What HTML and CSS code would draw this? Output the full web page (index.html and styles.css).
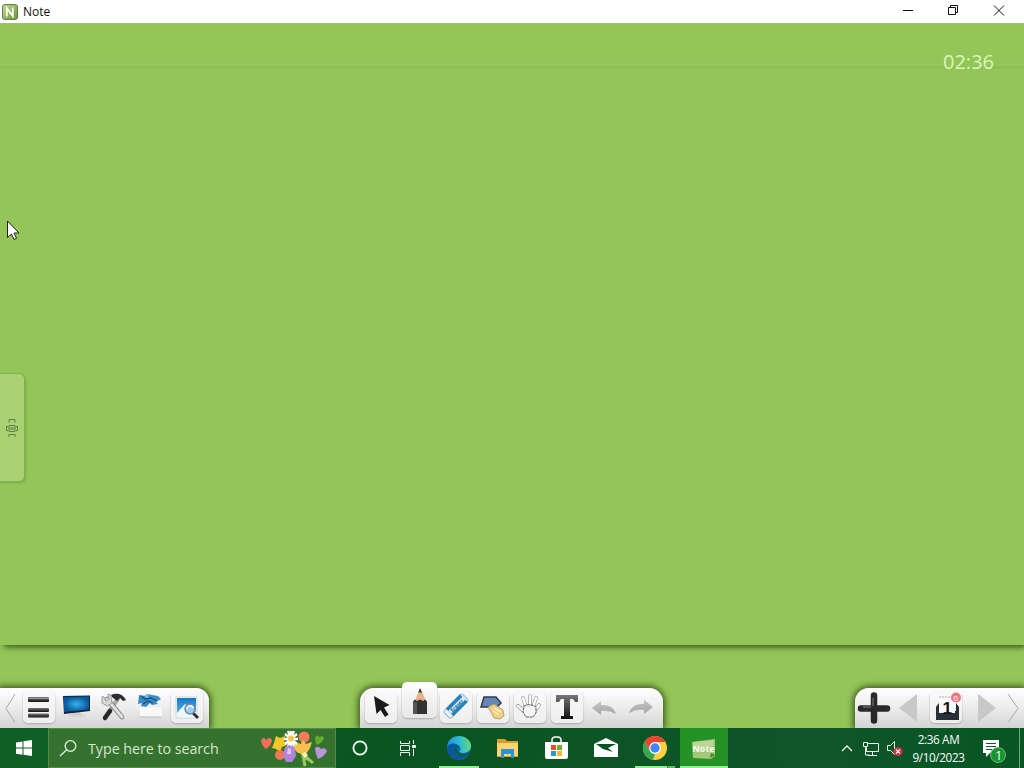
FILE: index.html
```html
<!DOCTYPE html>
<html lang="en">
<head>
<meta charset="utf-8">
<title>Note</title>
<link rel="stylesheet" href="styles.css">
</head>
<body>
<svg class="defs" width="0" height="0">
  <defs>
    <linearGradient id="dark" x2="0" y2="1"><stop offset="0" stop-color="#777"/><stop offset=".5" stop-color="#444"/><stop offset="1" stop-color="#111"/></linearGradient>
    <linearGradient id="grey" x2="0" y2="1"><stop offset="0" stop-color="#c6c6c6"/><stop offset="1" stop-color="#a5a5a5"/></linearGradient>
    <radialGradient id="screen"><stop offset="0" stop-color="#35b4ed"/><stop offset="1" stop-color="#08569c"/></radialGradient>
    <linearGradient id="photo" x2="0" y2="1"><stop offset="0" stop-color="#1478c8"/><stop offset="1" stop-color="#75bdea"/></linearGradient>
    <linearGradient id="edge" x1="0" y1=".4" x2="1" y2=".3"><stop offset="0" stop-color="#1a91dc"/><stop offset=".5" stop-color="#2dbbd1"/><stop offset="1" stop-color="#65d978"/></linearGradient>
    <linearGradient id="leaf" x2="1" y2="1"><stop offset="0" stop-color="#c7dd9a"/><stop offset="1" stop-color="#66943a"/></linearGradient>
  </defs>
</svg>
<div class="desktop">
  <header class="titlebar">
    <svg class="app-icon" width="16" height="16" viewBox="0 0 16 16"><rect x=".5" y=".5" width="15" height="15" rx="2.5" fill="url(#leaf)" stroke="#64803f"/><path d="M4.8 12.5V4.2L10.8 12V3.5" fill="none" stroke="#fffff0" stroke-width="1.8"/></svg>
    <span class="title">Note</span>
    <svg class="controls" width="144" height="23" viewBox="880 0 144 23" fill="none" stroke="#111"><path d="M903 10.5h10M948.500 7.500h7v7h-7zM950.500 7.500v-2h7v7h-2M994 5.500l10 10M1004 5.500l-10 10"/></svg>
  </header>

  <main class="board">
    <section class="paper">
      <time class="clock">02:36</time>
      <div class="side-tab">
        <svg width="14" height="20" viewBox="0 0 14 20" fill="none" stroke="#5f7f43"><path d="M4 4.500v-3h6v3M4 16v3M10 16v3M4 16.500h6M4 7.500h6v6H4zM6 9v3M8 9v3M1 8.500h2M1 12.500h2M1.500 8v5M11 8.500h2M11 12.500h2M12.500 8v5"/></svg>
      </div>
    </section>
    <nav class="docks">
      <div class="dock dock-left">
        <div class="edge-arrow"><svg width="20" height="40" viewBox="0 688 20 40" fill="none" stroke="#aaa"><path d="M15 694L6 708.500l9 14"/></svg></div>
        <div class="tool raised"><svg width="36" height="40" viewBox="21 688 36 40"><g fill="url(#dark)"><rect x="28" y="697" width="21" height="5" rx="1"/><rect x="28" y="708" width="21" height="4" rx="1"/><rect x="28" y="713.500" width="21" height="4" rx="1"/></g><path d="M29 698.500h20" stroke="#999"/></svg></div>
        <div class="tool"><svg width="36" height="40" viewBox="58 688 36 40"><ellipse cx="77" cy="715.500" rx="9" ry="2.200" fill="#d5d8da"/><path d="M73 712h7l1 3h-9z" fill="#c5cbd0"/><path d="M63 696l27-.5v15.500l-26 3z" fill="#18232d"/><path d="M64 697l25-.5v13l-25 2.500z" fill="url(#screen)"/></svg></div>
        <div class="tool"><svg width="36" height="40" viewBox="95 688 36 40" stroke-linecap="round"><path d="M118 699l-13 18" stroke="#aaa" stroke-width="4"/><path d="M110 711l-5 7" stroke="#282828" stroke-width="4.500"/><path d="M111 695c5-2 11-2 15 5l-3 1-3-3-3 3-5-4z" fill="#2d2d2d"/><path d="M107 699l15 18" stroke="#777" stroke-width="4.600"/><path d="M107 699l15 18" stroke="#e1e1e1" stroke-width="3"/><path d="M102 697v6l5 3 5-3-1-8-3-1 1 5-3 2-2-4z" fill="#d7d7d7" stroke="#888" stroke-width=".7"/></svg></div>
        <div class="tool"><svg width="36" height="40" viewBox="132 688 36 40"><path d="M140 707h22v10h-22z" fill="#f8f8f8"/><path d="M140 717h22" stroke="#bbb"/><path d="M139 695l7 1 2-2 4 1 6 1 3 3-5 3 2 2-6 1-2-2-4 4-5-1 1-3-4 1z" fill="#3b8bc9"/><path d="M141 696l4 3 6-1 6 3M143 704l5-3 5 2" stroke="#174f83" fill="none" stroke-width="1.300"/><circle cx="147" cy="696" r="2" fill="#75bae4"/></svg></div>
        <div class="tool raised"><svg width="36" height="40" viewBox="169 688 36 40"><path d="M176 697h21v21h-21z" fill="#fff" stroke="#c7d6df"/><path d="M177 698h19v19h-19z" fill="url(#photo)"/><path d="M177 717v-4l8-9 5 5 6 3v5z" fill="#edf7fc"/><path d="M193 713l5 5" stroke="#333" stroke-width="3"/><circle cx="190" cy="709" r="5" fill="#9fcceb" stroke="#648fae" stroke-width="1.500"/><path d="M186.500 709c2-4 5-4 7-1" stroke="#f4fcff" stroke-width="1.500" fill="none"/></svg></div>
      </div>

      <div class="dock dock-center">
        <div class="tool raised"><svg width="36" height="40" viewBox="363 688 36 40"><path d="M374 696l15.500 9-5.500 2.500 4.500 7-3.500 2.500-4.500-7-4 4z" fill="#1a1a1a"/></svg></div>
        <div class="tool selected"><svg width="36" height="42" viewBox="402 682 36 42"><path d="M415 701l4-10.500h2.500l4.500 10.500z" fill="#e6b28e"/><path d="M418.300 692.500l1.700-4.500 2 4.500z" fill="#303030"/><path d="M413 701.500l2-2 2 1.500 3-1.500 3 1.500 2-1.500 2 2V714h-14z" fill="#333"/><path d="M413 702h4v12h-4z" fill="#555"/></svg></div>
        <div class="tool raised"><svg width="36" height="40" viewBox="439 688 36 40"><g transform="rotate(-45 457 706)"><rect x="444" y="701" width="26" height="10" rx="2" fill="#eaf2f7" stroke="#9ab3c3"/><rect x="448" y="700.500" width="20" height="11" fill="#2482bd"/><rect x="448" y="704" width="20" height="4" fill="#d7edf7"/><text x="450" y="708" font-family="Open Sans" font-size="5" font-weight="700" fill="#176491">Eraser</text></g></svg></div>
        <div class="tool raised"><svg width="36" height="40" viewBox="476 688 36 40"><path d="M485 697h12l5 6-4 4h-16z" fill="#6787b5" stroke="#303b4d" stroke-width="1.500"/><path d="M489 707l6-3 9 6 1 6-4 3-6-1-2-4z" fill="#edcf86" stroke="#b8904d" stroke-width=".8"/><path d="M495 708l7 4M494 711l6 4" stroke="#fff0ba" stroke-width="1.500"/></svg></div>
        <div class="tool raised"><svg width="36" height="40" viewBox="512 688 36 40" stroke-linecap="round" stroke-linejoin="round"><path d="M524 711l-6-5M526 707l-3-9M530 707v-11M533 707l3-9M535 711l4-6" stroke="#888" stroke-width="3.600"/><path d="M524 711l-6-5M526 707l-3-9M530 707v-11M533 707l3-9M535 711l4-6" stroke="#fff" stroke-width="2.400"/><path d="M524 706q6-3 12 1v6l-3 4h-7l-3-5z" fill="#f4f4f4" stroke="#555" stroke-width="1" stroke-dasharray="2 1.500"/></svg></div>
        <div class="tool raised"><svg width="36" height="40" viewBox="549 688 36 40"><path d="M556 695h22v7h-3l-2-3h-3v17h3v3h-12v-3h3v-17h-3l-2 3h-3z" fill="url(#dark)"/></svg></div>
        <div class="tool"><svg width="36" height="40" viewBox="586 688 36 40"><path d="M592 708l9-7v4q12-1 15 9-7-4-15-3v4z" fill="url(#grey)"/></svg></div>
        <div class="tool"><svg width="36" height="40" viewBox="623 688 36 40"><path d="M653 707l-9-7v4q-12-1-15 9 7-4 15-3v4z" fill="url(#grey)"/></svg></div>
      </div>

      <div class="dock dock-right">
        <svg width="42" height="40" viewBox="855 688 42 40"><path d="M861 709h26M874 696v25" stroke="#292929" stroke-width="6.500" stroke-linecap="round" transform="translate(0 -.5)"/><path d="M863 707h8M873 698v8" stroke="#666" stroke-width="1.500"/></svg>
        <svg width="31" height="40" viewBox="897 688 31 40"><path d="M917 694v28l-18-14z" fill="#c8c8c8"/></svg>
        <div class="tool raised page"><svg width="38" height="40" viewBox="928 688 38 40"><path d="M936 707l3-4v8h17v-8l3 4v13h-23z" fill="#292f36"/><path d="M939 695h16v18h-16z" fill="#fafafa"/><path d="M939 697h16" stroke="#aaa" stroke-dasharray="2 1"/><text x="942.500" y="714" font-family="Liberation Sans" font-size="17" font-weight="700" fill="#111">1</text><circle cx="956" cy="697.500" r="5" fill="#ef7883"/><text x="953.600" y="700.500" font-family="Open Sans" font-size="8" fill="#fff">0</text></svg></div>
        <svg width="34" height="40" viewBox="966 688 34 40"><path d="M978 694v28l18-14z" fill="#c8c8c8"/></svg>
        <svg width="24" height="40" viewBox="1000 688 24 40"><path d="M1008 694l10 14.500-10 14" fill="none" stroke="#aaa"/></svg>
      </div>
    </nav>
  </main>

  <footer class="taskbar">
    <div class="start"><svg width="48" height="40" viewBox="0 728 48 40"><path d="M16 742.500l6.500-1v6H16zM23.500 741.300l8.500-1.200v7.400h-8.500zM16 748.500h6.500v6.200l-6.500-1zM23.500 748.500H32v7.500l-8.500-1.200z" fill="#fff"/></svg></div>
    <div class="search">
      <svg width="39" height="38" viewBox="49 729 39 38" fill="none" stroke="#e5f0df" stroke-width="1.300"><circle cx="70.500" cy="746" r="5.300"/><path d="M66.500 750l-6.500 6"/></svg>
      <span class="placeholder">Type here to search</span>
      <svg class="bouquet" width="76" height="38" viewBox="259 729 76 38">
        <g id="flowers"><path d="M303 755l-7-11M304 756l-1-15M304 755l9 8M303 755l2 11M302 756l9 5" stroke="#9acb57" stroke-width="3"/><path d="M261 740q3-4 5 0 4-4 6 0 0 5-6 9-5-4-5-9z" fill="#f06d58"/><path d="M315 738q2-5 4-1 4-2 5 1-1 4-7 7-2-3-2-7z" fill="#60ae29"/><path d="M315 748q3-3 6 1 5-2 6 2-2 5-9 8-3-6-3-11z" fill="#bc93dc"/>
        <path d="M276 736l4 2 5-2-1 5 3 4-5 2-2 5-4-3-4-1 2-5z" fill="#f3c72a"/><circle cx="304" cy="737" r="5.500" fill="#f27b5d"/><circle cx="280" cy="755" r="5" fill="#ed775b"/><path d="M294 742l7 2 2-4 3 4 6-2-2 6-4 6-8-1-5-5z" fill="#f7bf4e"/>
        <g stroke="#fff" stroke-width="2.300"><path d="M284 739h14M285 734l12 10M291 731v16M297 734l-12 10M288 731l6 15M294 731l-6 15"/></g><circle cx="291" cy="738.500" r="3" fill="#f2c64a"/><path d="M285 747l4-2 6 3 1 8-4 6h-6l-3-7z" fill="#af87d9"/><path d="M288 748l3 1v5h-4z" fill="#dfc6f4"/><path d="M302 754l3-2 3 3-3 3z" fill="#fff4bc"/></g>
      </svg>
    </div>
    <div class="task plain"><svg width="48" height="40" viewBox="336 728 48 40"><circle cx="360" cy="748" r="6.600" fill="none" stroke="#f4fff1" stroke-width="1.800"/></svg></div>
    <div class="task plain"><svg width="48" height="40" viewBox="384 728 48 40" fill="none" stroke="#eff9ed"><path d="M400.500 741v2.500h9V741M400.500 745.500h9v5h-9zM400.500 756v-3.500h9v3.500M413.500 740v4M413.500 749v7"/><path d="M412.500 745.500h3v2h-3z" fill="#fff"/></svg></div>
    <div class="task running first"><svg width="48" height="36" viewBox="435 728 48 36"><circle cx="459" cy="748" r="12" fill="#0d64b3"/><path d="M447 746q2-10 12-10c8 0 13 6 12 11-1 6-8 7-12 5 3-3 1-7-3-8-4-1-8 0-9 2z" fill="url(#edge)"/><path d="M455 748c-1 7 6 10 12 7-5 7-18 5-19-5 0-6 6-7 10-4-2 0-3 1-3 2z" fill="#0a579c"/><path d="M459 746q-4 2-1 6 5 4 12 0l-2 3q-6 3-11-1-5-5 0-8z" fill="#075f3f"/></svg></div>
    <div class="task"><svg width="48" height="40" viewBox="484 728 48 40"><path d="M497 739h8l2 2h11v16h-21z" fill="#dd9c29"/><path d="M497 743h21v13h-21z" fill="#ffd36d"/><path d="M501 749h13v9h-3v-4h-7v4h-3z" fill="#2995d6"/></svg></div>
    <div class="task"><svg width="48" height="40" viewBox="533 728 48 40"><path d="M545 742h23v15q0 2-2 2h-19q-2 0-2-2z" fill="#fff"/><path d="M552 742v-3q1-2 3-2h3q2 0 3 2v3" fill="none" stroke="#fff" stroke-width="1.500"/><path d="M551 745h5v5h-5z" fill="#e35031"/><path d="M557 745h5v5h-5z" fill="#78ad2a"/><path d="M551 751h5v5h-5z" fill="#259bd4"/><path d="M557 751h5v5h-5z" fill="#f1b92d"/></svg></div>
    <div class="task"><svg width="48" height="40" viewBox="582 728 48 40"><path d="M594 744l12-6 12 6v13h-24z" fill="#fff"/><path d="M596 744h20l-8 4 5 4-10-3z" fill="#075524"/></svg></div>
    <div class="task running chrome"><svg width="48" height="36" viewBox="631 728 48 36"><circle cx="655" cy="748" r="12" fill="#ffcf3e"/><path d="M644.600 742A12 12 0 0 1 665.400 742H655L650 751z" fill="#e84335"/><path d="M644.600 742L649.800 751 655 754 653 759.800A12 12 0 0 1 644.600 742" fill="#34a853"/><circle cx="655" cy="748" r="5.900" fill="#fff"/><circle cx="655" cy="748" r="4.700" fill="#4285f4"/></svg></div>
    <div class="task running active"><svg width="48" height="36" viewBox="680 728 48 36"><path d="M692 742l23-3v17l-4 3-18-1z" fill="#a2c779"/><path d="M693 742l21-2-1 6-20 3z" fill="#bdd696"/><path d="M710 758l1-5 4 2z" fill="#507d37"/><text x="692.500" y="752" font-family="Open Sans" font-size="9" font-weight="700" fill="#fffff4">Note</text></svg></div>
    <div class="tray">
      <svg width="70" height="40" viewBox="838 728 70 40" fill="none" stroke="#ecf6ec"><path d="M842 751l5-5 5 5" stroke-width="1.300"/><path d="M867 743.500h11.500v8H866.500v-4M872.500 751.500v4M868 755.500h9M863.500 742.500h4v4h-4zM865.500 747v8h4"/><path d="M887.500 745.500h3l4-4v13l-4-4h-3z"/><circle cx="898" cy="751.500" r="4.500" fill="#d82d3b" stroke="none"/><path d="M896 749.500l4 4M900 749.500l-4 4" stroke="#fff" stroke-width="1.100"/></svg>
      <div class="date"><span>2:36 AM</span><span>9/10/2023</span></div>
      <svg width="51" height="40" viewBox="969 728 51 40"><path d="M983 740h16v13h-9l-4 4v-4h-3z" fill="#fff"/><path d="M986 743.500h10M986 746.500h10M986 749.500h6" stroke="#135928"/><circle cx="998" cy="755" r="7.500" fill="#159534" stroke="#78b77c"/><text x="995.200" y="759.500" font-family="Open Sans" font-size="12" fill="#fff">1</text><path d="M1019.500 728v40" stroke="#74a483"/></svg>
    </div>
  </footer>
</div>
<svg class="cursor" width="14" height="22" viewBox="0 0 14 22"><path d="M1.500 1v16.500l4-3.500 2.500 5.500 2.500-1.200L8 13h5z" fill="#fff" stroke="#222"/></svg>
</body>
</html>
```
FILE: styles.css
```css
* { box-sizing: border-box; }
body { margin: 0; overflow: hidden; font-family: "Open Sans", "Noto Sans", sans-serif; }
svg { display: block; flex: none; }
.defs { position: absolute; }
.desktop { width: 1024px; height: 768px; display: flex; flex-direction: column; }
.titlebar { height: 23px; display: flex; align-items: center; background: #fff; color: #111; }
.app-icon { margin-left: 2px; }
.title { margin-left: 5px; font-size: 12px; line-height: 22px; }
.controls { margin-left: auto; }
.board { flex: 1; display: flex; flex-direction: column; justify-content: space-between; background: #94c558; border-top: 1px solid #a1bd79; overflow: hidden; }
.paper { height: 621px; display: flex; flex-direction: column; background: linear-gradient(#95c657, #94c558 42px, #8bbd54 43px, #94c558 46px); box-shadow: 3px 3px 6px -1px #36531d; }
.clock { align-self: flex-end; margin: 24px 30px 0 0; color: #dcf6bd; font: 20px/28px "Open Sans", sans-serif; }
.side-tab { width: 25px; height: 109px; margin-top: 297px; display: flex; align-items: center; justify-content: center; background: #a9d273; border: 1px solid #84b150; border-left: 0; border-radius: 0 6px 6px 0; box-shadow: 1px 1px 2px #7fa84b; }
.docks { height: 40px; display: flex; }
.dock { height: 40px; display: flex; align-items: flex-start; background: linear-gradient(#fff, #eaeaea 55%, #d3d3d3); box-shadow: 0 0 6px 2px #3c591f; }
.dock-left { width: 209px; border-radius: 0 13px 0 0; }
.dock-center { width: 303px; margin-left: 151px; padding-left: 2px; border-radius: 14px 14px 0 0; }
.dock-right { width: 169px; margin-left: auto; border-radius: 14px 0 0 0; }
.edge-arrow { width: 20px; }
.tool { width: 37px; height: 36px; display: flex; justify-content: center; border-radius: 5px; }
.raised { background: radial-gradient(closest-side, #fff8 90%, #fff0) center / 34px 34px no-repeat; }
.raised::before { content: ""; width: 32px; height: 32px; margin: 3px -32px 0 0; flex: none; background: linear-gradient(#f9f9f9, #eee); border-radius: 5px; box-shadow: 0 1px 2px #aaa; }
.raised svg { position: relative; margin: 0 -2px; }
.selected { height: 36px; width: 35px; margin: -6px 0 0 3px; background: linear-gradient(#fff, #f2f2f2 45%, #e7e7e7); box-shadow: 0 1px 2px #aaa; overflow: hidden; }
.page { width: 38px; }
.taskbar { height: 40px; display: flex; background: linear-gradient(100deg, #126024, #095420 40%, #10552a 78%, #075622); color: #fff; }
.start { width: 48px; background: #105f26; }
.search { width: 288px; display: flex; align-items: center; background: #35712f; border: 1px solid #528b46; color: #d6e8cc; }
.placeholder { font-size: 14.3px; letter-spacing: -.05px; white-space: nowrap; }
.bouquet { margin-left: auto; }
.task { width: 48px; height: 40px; margin-right: 1px; flex: none; overflow: hidden; }
.plain { margin-right: 0; }
.first { margin-left: 3px; }
.running { display: flex; flex-direction: column; align-items: center; }
.running::after { content: ""; width: 40px; height: 2px; margin-top: 2px; background: #92ef91; flex: none; }
.chrome::after { background: linear-gradient(90deg, #92ef91 32px, #398341 32px, #398341 33px, #62b967 33px); }
.active { background: #249226; }
.active::after { width: 48px; }
.tray { margin-left: auto; margin-right: 4px; display: flex; }
.date { width: 61px; display: flex; flex-direction: column; align-items: center; padding-top: 2px; font-size: 11.7px; line-height: 18px; letter-spacing: -.35px; white-space: nowrap; }
.cursor { position: absolute; left: 6px; top: 220px; }
```
